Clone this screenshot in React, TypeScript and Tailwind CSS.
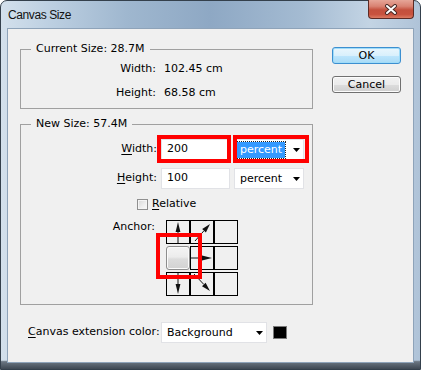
import React from 'react';

const ui = "font-['DejaVu_Sans',sans-serif] text-[11px] text-black";

const DropArrow = () => (
  <svg width="7" height="4" viewBox="0 0 7 4" className="shrink-0">
    <polygon points="0,0 7,0 3.5,4" fill="#000" />
  </svg>
);

interface SelectProps {
  value: string;
  selected?: boolean;
  width: string;
  pad: string;
}

const Select: React.FC<SelectProps> = ({ value, selected, width, pad }) => (
  <div className={`${width} h-[21px] bg-white border border-[#e1e2e6] flex items-center ${pad}`}>
    {selected ? (
      <span className="px-[3px] leading-[16px] bg-[#3399ff] text-white outline-1 outline-dotted outline-[#222]">{value}</span>
    ) : (
      <span className="leading-[16px]">{value}</span>
    )}
    <span className="ml-auto mr-[3px] flex">
      <DropArrow />
    </span>
  </div>
);

const Cell: React.FC<{ children?: React.ReactNode }> = ({ children }) => (
  <div className="w-[24px] h-[24px] border border-black">
    {children && (
      <svg width="22" height="22" viewBox="0 0 22 22">
        {children}
      </svg>
    )}
  </div>
);

const AnchorGrid = () => (
  <div className="grid grid-cols-[24px_24px_24px] gap-y-[2px]">
    <Cell>
      <line x1="11" y1="22" x2="11" y2="9" stroke="#111" strokeWidth="1" />
      <polygon points="11,1 8.6,11 13.4,11" fill="#111" />
    </Cell>
    <Cell>
      <line x1="4" y1="20" x2="13" y2="9.7" stroke="#111" strokeWidth="1" />
      <polygon points="19,3 14.9,11.4 11.2,8.1" fill="#111" />
    </Cell>
    <Cell />
    <div className="w-[24px] h-[24px] rounded-[3px] border border-[#8d8d8d] bg-[linear-gradient(180deg,#f5f5f5_0%,#ececec_45%,#dcdcdc_55%,#d2d2d2_100%)] shadow-[inset_0_0_0_1px_#fbfbfb]" />
    <Cell>
      <line x1="0" y1="11" x2="12" y2="11" stroke="#111" strokeWidth="1" />
      <polygon points="21,11 11,8.6 11,13.4" fill="#111" />
    </Cell>
    <Cell />
    <Cell>
      <line x1="11" y1="0" x2="11" y2="12" stroke="#111" strokeWidth="1" />
      <polygon points="11,21 8.6,11 13.4,11" fill="#111" />
    </Cell>
    <Cell>
      <line x1="3" y1="1" x2="12.8" y2="11.4" stroke="#111" strokeWidth="1" />
      <polygon points="19,18 14.6,9.7 11,13.2" fill="#111" />
    </Cell>
    <Cell />
  </div>
);

const Button: React.FC<{ label: string; primary?: boolean }> = ({ label, primary }) => (
  <button
    className={`w-[69px] h-[17px] rounded-[3px] border leading-[15px] text-center ${
      primary
        ? 'border-[#3c8fd0] bg-[linear-gradient(180deg,#eaf6fd_0%,#d9f0fc_50%,#bee6fd_50%,#a9dbf6_100%)] shadow-[inset_0_0_0_1px_#9fdcf9]'
        : 'border-[#707070] bg-[linear-gradient(180deg,#f2f2f2_0%,#ebebeb_50%,#dddddd_50%,#cfcfcf_100%)] shadow-[inset_0_0_0_1px_#fcfcfc]'
    }`}
  >
    {label}
  </button>
);

export default function App() {
  return (
    <div className="relative w-[421px] h-[370px] overflow-hidden bg-white">
      <div className="flex flex-col w-full h-full rounded-t-[7px] border border-[#34404c] bg-[linear-gradient(180deg,rgba(0,0,0,0)_97.6%,#6b7682_98%,#3e4853_100%),linear-gradient(90deg,#d3e0ec_0%,#bccfe1_12%,#9fb7cf_30%,#8ea8c4_50%,#a4bbd2_72%,#c3d4e4_88%,#afc3d8_100%)]">
        {/* title bar */}
        <div className="h-[27px] flex items-start shrink-0">
          <span className="pl-[7px] mt-[7px] font-['Liberation_Sans',sans-serif] text-[12px] leading-[14px] tracking-[-0.4px] text-[#111]">
            Canvas Size
          </span>
          <div className="ml-auto mr-[6px] -mt-px w-[46px] h-[19px] rounded-b-[4px] border border-[#5c2a24] border-t-0 bg-[linear-gradient(180deg,#e6a698_0%,#d98272_35%,#c4503d_55%,#c8523e_80%,#dc7b62_100%)] flex items-center justify-center">
            <svg width="14" height="11" viewBox="0 0 14 11">
              <path d="M3 2 L11 9 M11 2 L3 9" stroke="#4a2a26" strokeWidth="4" strokeLinecap="round" />
              <path d="M3 2 L11 9 M11 2 L3 9" stroke="#ffffff" strokeWidth="2" strokeLinecap="round" />
            </svg>
          </div>
        </div>

        {/* client area */}
        <div className={`${ui} flex-1 mx-[6px] mb-[6px] border border-[#8ea3b9] bg-[#f0f0f0] pl-[12px] pt-[13px] flex flex-col`}>
          <div className="flex items-start">
            <div className="w-[293px] flex flex-col">
              <fieldset className="border border-[#a0a0a0] pt-[2px] pb-[3px]">
                <legend className="ml-[10px] px-[5px] leading-[14px]">Current Size: 28.7M</legend>
                <div className="grid grid-cols-[135px_auto] gap-x-[8px] gap-y-[1px] auto-rows-[23px] items-center">
                  <span className="text-right">Width:</span>
                  <span>102.45 cm</span>
                  <span className="text-right">Height:</span>
                  <span>68.58 cm</span>
                </div>
              </fieldset>

              <fieldset className="mt-[8px] border border-[#a0a0a0] pt-[8px] pb-[8px]">
                <legend className="ml-[10px] px-[5px] leading-[14px]">New Size: 57.4M</legend>
                <div className="flex items-center h-[21px]">
                  <span className="w-[136px] text-right">
                    <span className="underline underline-offset-2">W</span>idth:
                  </span>
                  <div className="ml-[4px] w-[69px] h-[21px] bg-white border border-[#e1e2e6] flex items-center pl-[5px]">200</div>
                  <div className="ml-[4px]">
                    <Select value="percent" selected width="w-[70px]" pad="pl-[2px]" />
                  </div>
                </div>
                <div className="flex items-center h-[21px] mt-[8px]">
                  <span className="w-[136px] text-right">
                    <span className="underline underline-offset-2">H</span>eight:
                  </span>
                  <div className="ml-[4px] w-[69px] h-[21px] bg-white border border-[#e1e2e6] flex items-center pl-[5px]">100</div>
                  <div className="ml-[4px]">
                    <Select value="percent" width="w-[70px]" pad="pl-[5px]" />
                  </div>
                </div>
                <div className="flex items-center h-[14px] mt-[8px] pl-[116px]">
                  <span className="w-[11px] h-[11px] border border-[#8f8f8f] bg-[linear-gradient(135deg,#d6d6d6_0%,#eeeeee_60%,#f8f8f8_100%)] shadow-[inset_0_0_0_1px_#f4f4f4]" />
                  <span className="ml-[4px] leading-[14px]">
                    <span className="underline underline-offset-2">R</span>elative
                  </span>
                </div>
                <div className="flex items-start mt-[9px]">
                  <span className="w-[134px] text-right leading-[14px]">Anchor:</span>
                  <div className="ml-[11px]">
                    <AnchorGrid />
                  </div>
                </div>
              </fieldset>
            </div>

            <div className="ml-[19px] mt-[5px] flex flex-col gap-[12px]">
              <Button label="OK" primary />
              <Button label="Cancel" />
            </div>
          </div>

          <div className="flex items-center mt-[17px] h-[21px]">
            <span className="ml-[8px] w-[133px] whitespace-nowrap">
              <span className="underline underline-offset-2">C</span>anvas extension color:
            </span>
            <Select value="Background" width="w-[106px]" pad="pl-[5px]" />
            <div className="ml-[6px] w-[14px] h-[13px] bg-black border border-[#7a7a7a]" />
          </div>
        </div>
      </div>

      {/* red annotation boxes */}
      <div className="absolute left-[157px] top-[135px] w-[74px] h-[28px] border-4 border-[#ff0000]" />
      <div className="absolute left-[233px] top-[135px] w-[76px] h-[28px] border-4 border-[#ff0000]" />
      <div className="absolute left-[156px] top-[233px] w-[46px] h-[46px] border-4 border-[#ff0000]" />
    </div>
  );
}
